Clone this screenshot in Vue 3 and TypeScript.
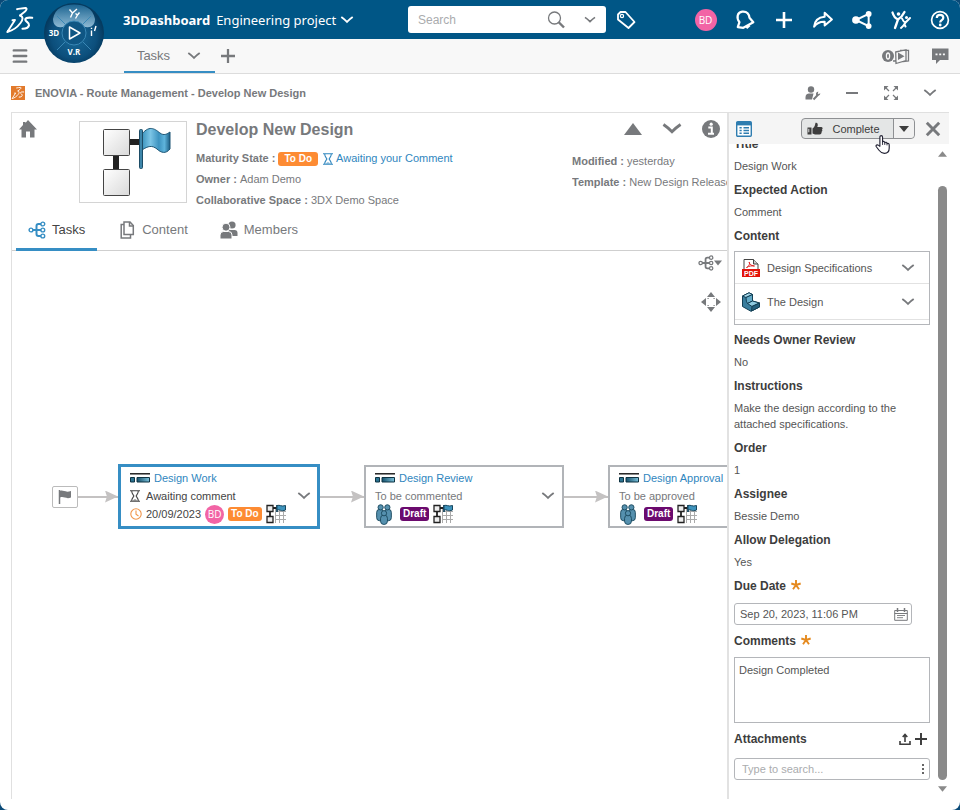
<script setup lang="ts">
import { ref } from 'vue'

interface RouteTask {
  name: string
  action: string
  state: string
  due?: string
  assignee?: string
  selected?: boolean
}

interface Field {
  label: string
  value: string
}

const routeTasks: RouteTask[] = [
  { name: 'Design Work', action: 'Awaiting comment', state: 'To Do', due: '20/09/2023', assignee: 'BD', selected: true },
  { name: 'Design Review', action: 'To be commented', state: 'Draft' },
  { name: 'Design Approval', action: 'To be approved', state: 'Draft' },
]

const leadFields: Field[] = [
  { label: 'Title', value: 'Design Work' },
  { label: 'Expected Action', value: 'Comment' },
]

const contents = [
  { icon: 'i-pdf', name: 'Design Specifications' },
  { icon: 'i-part', name: 'The Design' },
]

const fields: Field[] = [
  { label: 'Needs Owner Review', value: 'No' },
  { label: 'Instructions', value: 'Make the design according to the attached specifications.' },
  { label: 'Order', value: '1' },
  { label: 'Assignee', value: 'Bessie Demo' },
  { label: 'Allow Delegation', value: 'Yes' },
]

const topActions = [
  { icon: 'i-bell', name: 'Notifications' },
  { icon: 'i-plus', name: 'Add' },
  { icon: 'i-share', name: 'Share' },
  { icon: 'i-nodes', name: 'Communities' },
  { icon: 'i-people', name: 'People' },
  { icon: 'i-help', name: 'Help' },
]

const windowActions = [
  { icon: 'i-userwrench', name: 'Preferences' },
  { icon: 'i-minus', name: 'Minimize' },
  { icon: 'i-expand', name: 'Maximize' },
  { icon: 'i-chev', name: 'Options' },
]

const search = ref('')
const dueDate = ref('Sep 20, 2023, 11:06 PM')
const comment = ref('Design Completed')
const attachment = ref('')
</script>

<template>
  <div class="shell">
    <svg class="defs" aria-hidden="true">
      <defs>
        <linearGradient id="g-box" x1="0" y1="0" x2="1" y2="1"><stop offset="0" stop-color="#fff" /><stop offset="1" stop-color="#d9d9d9" /></linearGradient>
        <linearGradient id="g-flag" x1="0" y1="0" x2="1" y2="0"><stop offset="0" stop-color="#3b93bd" /><stop offset=".3" stop-color="#7cc5e6" /><stop offset=".6" stop-color="#3d93c0" /><stop offset=".8" stop-color="#5fb4dc" /><stop offset="1" stop-color="#1d5f85" /></linearGradient>
        <linearGradient id="g-bar" x1="0" y1="0" x2="1" y2="0"><stop offset="0" stop-color="#14506b" /><stop offset="1" stop-color="#7cc0da" /></linearGradient>
        <radialGradient id="g-compass" cx=".5" cy=".55" r=".5"><stop offset="0" stop-color="#1a6c9c" /><stop offset=".75" stop-color="#0c4f7c" /><stop offset="1" stop-color="#053b60" /></radialGradient>
        <linearGradient id="g-gloss" x1="0" y1="0" x2="0" y2="1"><stop offset="0" stop-color="#1d6896" /><stop offset="1" stop-color="#9cc4dc" /></linearGradient>
      </defs>
      <symbol id="i-ds" viewBox="5 5 30 30">
        <g fill="none" stroke="currentColor" stroke-linecap="round" stroke-linejoin="round">
          <path d="M17 9.200C20 8.800 23 8 25.500 8C27.500 8.300 26.500 10 25 11.500L20 15.500" stroke-width="1.900" />
          <path d="M20 15.500C23.500 16.500 23 20 20.500 23C17.500 27 13 30.500 7.300 32L15 20L12.500 20.300" stroke-width="1.900" />
          <path d="M32.200 17.800C29 17.400 26 17.800 25.300 19.300C25 21.500 29.500 22.500 29 25.300C28.500 28 26 28.700 22.500 28.800" stroke-width="2.100" />
        </g>
      </symbol>
      <symbol id="i-chev" viewBox="0 0 16 16"><path d="M2.300 5C4.500 6.500 6.500 8.300 8 9.800C9.500 8.300 11.500 6.500 13.700 5" fill="none" stroke="currentColor" stroke-width="1.900" /></symbol>
      <symbol id="i-plus" viewBox="0 0 16 16"><path d="M8 0v16M0 8h16" stroke="currentColor" stroke-width="2.600" /></symbol>
      <symbol id="i-bell" viewBox="0 0 18 18"><path d="M2.500 15.500L4 11C1 7 2 2 6.500 1.500C11 1 12.800 4 13 7L16.500 11L7.500 16Z" fill="none" stroke="currentColor" stroke-width="2" stroke-linejoin="round" /><path d="M9 15l3-2 2 1.500-3 2.500z" fill="currentColor" /></symbol>
      <symbol id="i-share" viewBox="0 0 18 18"><path d="M1 15C1.500 9.500 4.500 6.500 10.500 6V2.500L17 8.500L10.500 14V10.500C6.500 10.300 3.500 11.500 1 15Z" fill="none" stroke="currentColor" stroke-width="1.800" stroke-linejoin="round" /></symbol>
      <symbol id="i-nodes" viewBox="0 0 18 18"><path d="M15 3.500L3.500 9L15 14.500Z" fill="none" stroke="currentColor" stroke-width="1.800" /><circle cx="15" cy="3.500" r="2.600" fill="currentColor" /><circle cx="3.500" cy="9" r="3.400" fill="currentColor" /><circle cx="15" cy="14.500" r="2.600" fill="currentColor" /></symbol>
      <symbol id="i-people" viewBox="0 0 20 20"><g fill="none" stroke="currentColor" stroke-linecap="round" stroke-linejoin="round"><path d="M1.500 2.500C2.500 6 4.500 8.500 7 9.500C9.500 8 12 5 13.500 2M7 9.500L4 18M5.500 14L4 18" stroke-width="2.300" /><path d="M11 8.500C12 11 13 12 14.500 12.500L19 8M14.500 12.500C13.500 14.500 12.500 16 10 18M13.500 14.500L14.500 16.500" stroke-width="2" /></g><circle cx="7.500" cy="4" r="1.800" fill="currentColor" /><circle cx="15.500" cy="7.500" r="1.500" fill="currentColor" /></symbol>
      <symbol id="i-help" viewBox="0 0 20 20"><circle cx="10" cy="10" r="8.400" fill="none" stroke="currentColor" stroke-width="1.700" /><path d="M6.800 8C6.800 3.800 13.300 4 13.300 7.800C13.300 10.200 10.200 10 10.200 12.500" fill="none" stroke="currentColor" stroke-width="2.200" /><circle cx="10.200" cy="15" r="1.400" fill="currentColor" /></symbol>
      <symbol id="i-tag" viewBox="0 0 20 20"><path d="M2 4.500L4.500 2H9.500L18.500 12L12.500 18L2 9.500Z" fill="none" stroke="currentColor" stroke-width="1.800" stroke-linejoin="round" /><circle cx="6" cy="6" r="1.600" fill="none" stroke="currentColor" stroke-width="1.200" /></symbol>
      <symbol id="i-search" viewBox="0 0 18 18"><circle cx="7.500" cy="7" r="6" fill="none" stroke="currentColor" stroke-width="1.300" /><path d="M11.500 11L17 16.500" stroke="currentColor" stroke-width="2.400" /></symbol>
      <symbol id="i-menu" viewBox="0 0 16 16"><path d="M2.500 3h11M2.500 8h11M2.500 13h11" stroke="currentColor" stroke-width="2.200" stroke-linecap="round" /></symbol>
      <symbol id="i-play" viewBox="0 0 30 18"><circle cx="7" cy="9" r="6" fill="currentColor" /><ellipse cx="7" cy="9" rx="1.600" ry="3" fill="none" stroke="#f8f8f8" stroke-width="1.300" /><path d="M12 14h2.500v-1M14.700 5L25 2.700V13.500L15 16.500ZM19 3.300L27.500 3.300V14L22 14.500" fill="none" stroke="currentColor" stroke-width="1.300" /><path d="M17 5.500L23.500 9.200L17 13Z" fill="currentColor" /></symbol>
      <symbol id="i-chat" viewBox="0 0 18 18"><path d="M1 1.500h16.500v11.500H9L5 17V13H1Z" fill="currentColor" /><path d="M4.500 7.300h2M8.200 7.300h2M11.900 7.300h2" stroke="#f8f8f8" stroke-width="1.800" /></symbol>
      <symbol id="i-userwrench" viewBox="0 0 16 16"><circle cx="6" cy="4.500" r="3.200" fill="currentColor" /><path d="M.5 14.500V12C.5 9.500 2.500 8.500 4 8.500h4.500L7 14.500Z" fill="currentColor" /><path d="M8.500 14.500L13 9.800" stroke="currentColor" stroke-width="2" /><path d="M15.200 8L13.800 9.300L12.700 8.300L13.500 6.800C11.500 6.500 10.300 8.500 11.300 10.300C13 11.500 15.500 10.500 15.200 8Z" fill="currentColor" /></symbol>
      <symbol id="i-minus" viewBox="0 0 16 16"><path d="M2 8h12" stroke="currentColor" stroke-width="1.800" /></symbol>
      <symbol id="i-expand" viewBox="0 0 16 16"><path d="M1 1h4.500L1 5.500ZM15 1v4.500L10.500 1ZM1 15v-4.500L5.500 15ZM15 15h-4.500L15 10.500Z" fill="currentColor" /><path d="M2 2l4 4M14 2l-4 4M2 14l4-4M14 14l-4-4" stroke="currentColor" stroke-width="1.200" /></symbol>
      <symbol id="i-home" viewBox="0 0 18 18"><path d="M9 0L18 9.500H15.500V17.500H11V11.500H7V17.500H2.500V9.500H0L4 5V2h2.500v1Z" fill="currentColor" /></symbol>
      <symbol id="i-info" viewBox="0 0 18 18"><circle cx="9" cy="9" r="9" fill="currentColor" /><path d="M6.300 7.500h3.500v6M6 13.700h6" fill="none" stroke="#fff" stroke-width="2" /><circle cx="9.200" cy="4.200" r="1.600" fill="#fff" /></symbol>
      <symbol id="i-tree" viewBox="0 0 18 18"><g fill="none" stroke="currentColor"><path d="M4.500 9H13M13 3H10.500Q8.500 3 8.500 5V13Q8.500 15 10.500 15H13" stroke-width="2" /><circle cx="3" cy="9" r="1.900" stroke-width="1.400" /><circle cx="14.800" cy="3" r="1.900" stroke-width="1.400" /><circle cx="14.800" cy="9" r="1.900" stroke-width="1.400" /><circle cx="14.800" cy="15" r="1.900" stroke-width="1.400" /></g></symbol>
      <symbol id="i-docs" viewBox="0 0 16 18"><g fill="none" stroke="currentColor" stroke-width="1.500"><path d="M5 1h6l3.300 3.500V13.500H5Z" /><path d="M10.500 1v4h4M5 3.500H2.200V17H11.500V13.500" /></g></symbol>
      <symbol id="i-users" viewBox="0 0 18 18"><circle cx="12" cy="4" r="3.600" fill="currentColor" /><path d="M8 15V9h6.500q3 0 3 3v3Z" fill="currentColor" /><g fill="currentColor" stroke="#fff" stroke-width="1"><circle cx="6" cy="6.200" r="4" /><path d="M0 18v-4q0-3.500 3.500-3.500h5q3.500 0 3.500 3.500v4Z" /></g></symbol>
      <symbol id="i-glass" viewBox="0 0 10 12"><path d="M0 .7h10M0 11.300h10M1.700 1C1.700 4 3.800 5 3.800 6S1.700 8 1.700 11M8.300 1C8.300 4 6.200 5 6.200 6S8.300 8 8.300 11" fill="none" stroke="currentColor" stroke-width="1.100" /><path d="M2.800 10.500Q5 8.500 7.200 10.500Z" fill="currentColor" /></symbol>
      <symbol id="i-move" viewBox="0 0 22 22"><path d="M11 1l4 5H7ZM11 21l4-5H7ZM1 11l5-4v8ZM21 11l-5-4v8Z" fill="currentColor" /><path d="M7.500 7.500h1.200M13.500 7.500h1.200M7.500 14.500h1.200M13.500 14.500h1.200" stroke="currentColor" stroke-width="1.200" /></symbol>
      <symbol id="i-down" viewBox="0 0 10 8"><path d="M0 1h10L5 7Z" fill="currentColor" /></symbol>
      <symbol id="i-up" viewBox="0 0 18 12"><path d="M9 0l9 12H0Z" fill="currentColor" /></symbol>
      <symbol id="i-flag" viewBox="0 0 14 16"><path d="M1.500 1v14" stroke="currentColor" stroke-width="1.500" /><path d="M2 2C5 .5 7 4 13 2V8.500C8 10.500 6 7 2 8.500Z" fill="currentColor" /></symbol>
      <symbol id="i-bar" viewBox="0 0 20 10"><path d="M0 .8h20" stroke="#111" stroke-width="1.400" /><path d="M.5 4.500h4v4.500h-4Z" fill="#2b7391" stroke="#0d3242" /><path d="M7 4.500h12.500v4.500H7Z" fill="url(#g-bar)" stroke="#0d3242" /></symbol>
      <symbol id="i-clock" viewBox="0 0 12 12"><circle cx="6" cy="6" r="5.200" fill="none" stroke="currentColor" stroke-width="1.100" /><path d="M6 2.500V6.300L8.500 8" fill="none" stroke="currentColor" stroke-width="1.100" /></symbol>
      <symbol id="i-route" viewBox="0 0 20 20"><path d="M9 7.500h11M9 11.500h11M9 15.500h11M9.500 4v15M13.500 4v15M17.500 4v15" stroke="#aaa" /><path d="M6 4h5M4 6v9" stroke="#222" stroke-width="1.800" /><path d="M1 1.500h6v6H1ZM1 12.500h6v6H1Z" fill="#eee" stroke="#222" stroke-width="1.300" /><path d="M11 1v7" stroke="#17475f" stroke-width="1.800" /><path d="M11 1.500C14 .5 15 3 19.500 1.500V6C15 8 14 5 11 6Z" fill="#3e93bc" stroke="#17475f" /></symbol>
      <symbol id="i-group" viewBox="0 0 16 20"><g fill="#5590ae" stroke="#1c4a60" stroke-width=".9"><rect x="1" y="5" width="6.500" height="11" rx="3" /><rect x="8.500" y="5" width="6.500" height="11" rx="3" /><circle cx="4.800" cy="3.200" r="2.500" /><circle cx="11.200" cy="3.200" r="2.500" /><rect x="4.700" y="10.500" width="6.600" height="9" rx="3.200" /><circle cx="8" cy="8.800" r="2.500" /></g></symbol>
      <symbol id="i-list" viewBox="0 0 16 16"><rect x=".7" y=".7" width="14.600" height="14.600" rx="1" fill="#fff" stroke="#2f7db0" stroke-width="1.400" /><path d="M1 2.700h14" stroke="#2f7db0" stroke-width="3.400" /><path d="M3.500 6.700h2.200M3.500 9.500h2.200M3.500 12.300h2.200M7.500 6.700h5.500M7.500 9.500h5.500M7.500 12.300h5.500" stroke="#2f7db0" stroke-width="1.500" /></symbol>
      <symbol id="i-thumb" viewBox="0 0 16 14"><path d="M.5 5.500h4v7h-4Z" fill="currentColor" /><path d="M1.800 6.800v3.500" stroke="#ddd" /><path d="M5.500 6.500C8 5 8 3 8.500.8C10.500.3 11.500 2.500 10.300 5H14.500C16 5.500 15.800 7 15 7.500C15.800 8.500 15 9.700 14.500 9.800C15 11 14 12.500 12.500 12.500H8L5.500 11.500Z" fill="currentColor" /></symbol>
      <symbol id="i-x" viewBox="0 0 16 16"><path d="M2.500 2.500l11 11M13.500 2.500l-11 11" stroke="currentColor" stroke-width="2.600" /></symbol>
      <symbol id="i-pdf" viewBox="0 0 20 20"><path d="M3 1.500h9.500L17 6V18H3Z" fill="#fff" stroke="#444" /><path d="M12.500 1.500V6H17" fill="#ccc" stroke="#444" /><path d="M5.500 9.500C8.500 8 9 5 8.300 4C7.500 4.500 9.500 8 13.500 8C11 7.500 8 8 5.500 9.500Z" fill="none" stroke="#d11" stroke-width=".9" /><path d="M1 11h18v8H1Z" fill="#e3120b" /></symbol>
      <symbol id="i-part" viewBox="0 0 20 20"><g stroke="#123f54" stroke-width="1" stroke-linejoin="round"><path d="M1.500 4L8 .8L11.500 2.500V9L18.500 11V15L10 19.300L1.500 14.500Z" fill="#397d9d" /><path d="M1.500 4L8 .8L11.500 2.500L5 5.500Z" fill="#a8d8ea" /><path d="M5 5.500L11.500 2.500V9L6.500 11.500Q5 10 5 5.500Z" fill="#62a9c6" /><path d="M6.500 11.500L11.500 9L18.500 11L11 14.500Z" fill="#8ecae0" /><path d="M11 14.500L18.500 11V15L10.500 19Z" fill="#245f7c" /></g></symbol>
      <symbol id="i-cal" viewBox="0 0 14 13"><path d="M.7 2.500h12.600v9.800H.7ZM.7 5.500h12.600" fill="none" stroke="currentColor" /><path d="M3.500 0v4M10.500 0v4" stroke="currentColor" stroke-width="1.500" /><path d="M3 7.500h8M3 9.700h6" stroke="currentColor" stroke-width=".9" /></symbol>
      <symbol id="i-upload" viewBox="0 0 12 12"><path d="M1 8v3.200h10V8M6 9V1.500M3.700 4L6 1.500L8.300 4" fill="none" stroke="currentColor" stroke-width="1.600" /></symbol>
      <symbol id="i-star" viewBox="0 0 10 10"><path d="M5 5V0M5 5L.3 3.500M5 5L9.700 3.500M5 5L2 9.200M5 5L8 9.200" stroke="#e58a1f" stroke-width="1.900" /></symbol>
    </svg>

    <header class="topbar">
      <a href="#" class="logo" aria-label="Home"><svg><use href="#i-ds" /></svg></a>
      <button class="compass" aria-label="Compass">
        <svg viewBox="0 0 60 64">
          <circle cx="30" cy="33" r="30" fill="url(#g-compass)" />
          <path d="M9 19C11 8 20 4.500 30 4.500S49 8 51 19C51 25 47 28 42 27H18C13 28 9 25 9 19Z" fill="url(#g-gloss)" opacity=".9" />
          <circle cx="30" cy="33" r="12" fill="#0f5684" stroke="#3987b5" />
          <path d="M21 24l-8-8M39 24l8-8M21 42l-8 8M39 42l8 8" stroke="#3987b5" />
          <path d="M25.500 27L36 33L25.500 39Z" fill="none" stroke="#fff" stroke-width="1.500" stroke-linejoin="round" />
          <path d="M25.500 9.500L28.500 13L33 9M28.500 13L26.500 17.500M31.500 13.500L33.500 15L35.500 12.500M33.500 15L31.500 18.500" fill="none" stroke="#fff" stroke-width="1.400" />
          <path d="M47.500 30.500v5.500M47.500 27.800v1.200M50.500 31l1.500-5" stroke="#fff" stroke-width="1.400" />
          <text x="10" y="36" text-anchor="middle">3D</text>
          <text x="30" y="55" text-anchor="middle">V.R</text>
        </svg>
      </button>
      <h1 class="brand">3DDashboard</h1>
      <button class="project">Engineering project <svg><use href="#i-chev" /></svg></button>
      <div class="searchbox">
        <input v-model="search" type="text" placeholder="Search" aria-label="Search" />
        <button class="find" aria-label="Search"><svg><use href="#i-search" /></svg></button>
        <button class="scope" aria-label="Search options"><svg><use href="#i-chev" /></svg></button>
      </div>
      <button class="tool" aria-label="Tags"><svg><use href="#i-tag" /></svg></button>
      <nav class="actions">
        <button class="tool" aria-label="Profile"><span class="avatar">BD</span></button>
        <button v-for="a in topActions" :key="a.icon" class="tool" :aria-label="a.name"><svg :class="{ slim: a.icon === 'i-plus' }"><use :href="'#' + a.icon" /></svg></button>
      </nav>
    </header>

    <div class="tabbar">
      <button class="tool menu" aria-label="Menu"><svg><use href="#i-menu" /></svg></button>
      <button class="tab">Tasks <svg><use href="#i-chev" /></svg></button>
      <button class="add" aria-label="Add tab"><svg><use href="#i-plus" /></svg></button>
      <button class="tool play" aria-label="Play"><svg><use href="#i-play" /></svg></button>
      <button class="tool" aria-label="Chat"><svg><use href="#i-chat" /></svg></button>
    </div>

    <div class="widgetbar">
      <span class="appicon"><svg><use href="#i-ds" /></svg></span>
      <h2>ENOVIA - Route Management - Develop New Design</h2>
      <div class="winactions">
        <button v-for="a in windowActions" :key="a.icon" class="tool" :aria-label="a.name"><svg><use :href="'#' + a.icon" /></svg></button>
      </div>
    </div>

    <div class="frame">
      <main class="route">
        <section class="summary">
          <a href="#" class="home" aria-label="Home"><svg><use href="#i-home" /></svg></a>
          <div class="thumb">
            <svg viewBox="0 0 106 80">
              <path d="M49 20h12M36 33v16" stroke="#222" stroke-width="6" />
              <rect x="23.500" y="7.500" width="26" height="26" rx="1" fill="url(#g-box)" stroke="#444" />
              <rect x="23.500" y="47.500" width="26" height="26" rx="1" fill="url(#g-box)" stroke="#444" />
              <path d="M62 12C70 2 76 8 80 11C84 14 87 12 90 10V27C86 32 81 31 77 27C72 23 68 24 62 28Z" fill="url(#g-flag)" stroke="#1c5574" />
              <rect x="59.500" y="7.500" width="3" height="39" rx="1" fill="#3e86aa" stroke="#1c4c66" />
            </svg>
          </div>
          <div class="info">
            <h3>Develop New Design</h3>
            <p><b>Maturity State :</b> <span class="badge todo">To Do</span> <a href="#"><svg><use href="#i-glass" /></svg>Awaiting your Comment</a></p>
            <p><b>Owner :</b> Adam Demo</p>
            <p><b>Collaborative Space :</b> 3DX Demo Space</p>
          </div>
          <div class="meta">
            <div class="pager">
              <button class="tool" aria-label="Previous"><svg class="up"><use href="#i-up" /></svg></button>
              <button class="tool" aria-label="Next"><svg class="big"><use href="#i-chev" /></svg></button>
              <button class="tool" aria-label="Information"><svg><use href="#i-info" /></svg></button>
            </div>
            <p><b>Modified :</b> yesterday</p>
            <p><b>Template :</b> New Design Release</p>
          </div>
        </section>

        <nav class="subtabs">
          <button class="active"><svg><use href="#i-tree" /></svg>Tasks</button>
          <button><svg><use href="#i-docs" /></svg>Content</button>
          <button><svg><use href="#i-users" /></svg>Members</button>
        </nav>

        <section class="canvas">
          <div class="viewtools">
            <button aria-label="Layout"><svg class="tree"><use href="#i-tree" /></svg><svg class="caret"><use href="#i-down" /></svg></button>
            <button aria-label="Fit"><svg class="move"><use href="#i-move" /></svg></button>
          </div>
          <div class="flow">
            <span class="start"><svg><use href="#i-flag" /></svg></span>
            <template v-for="t in routeTasks" :key="t.name">
              <span class="arrow"></span>
              <article class="card" :class="{ selected: t.selected }">
                <div class="cardbody">
                  <div class="row"><svg class="bar"><use href="#i-bar" /></svg><a href="#">{{ t.name }}</a></div>
                  <div class="row"><svg v-if="t.selected" class="glass"><use href="#i-glass" /></svg>{{ t.action }}</div>
                  <div class="row">
                    <template v-if="t.due"><svg class="clock"><use href="#i-clock" /></svg><span>{{ t.due }}</span><span class="avatar small">{{ t.assignee }}</span></template>
                    <svg v-else class="group"><use href="#i-group" /></svg>
                    <span class="badge" :class="t.state === 'Draft' ? 'draft' : 'todo'">{{ t.state }}</span>
                    <svg class="grid"><use href="#i-route" /></svg>
                  </div>
                </div>
                <button class="open" aria-label="Open task menu"><svg><use href="#i-chev" /></svg></button>
              </article>
            </template>
          </div>
        </section>
      </main>

      <aside class="panel">
        <div class="panelbar">
          <svg class="list"><use href="#i-list" /></svg>
          <div class="split">
            <button class="complete"><svg><use href="#i-thumb" /></svg>Complete</button>
            <button class="more" aria-label="More actions"><svg><use href="#i-down" /></svg></button>
          </div>
          <button class="close" aria-label="Close"><svg><use href="#i-x" /></svg></button>
        </div>
        <svg class="pointer" viewBox="0 0 18 22"><path d="M5.500 13V2.500C5.500.5 8.500.5 8.500 2.500V8C9.500 7 11 7.500 11 9C12 8 13.500 8.500 13.500 10C14.500 9.300 16 10 16 11.500V15C16 18.500 14 21 10.500 21C7.500 21 6 19.500 4.500 17.500L1.500 13.500C.5 12 2.500 10.500 4 12Z" fill="#fff" stroke="#223" stroke-width="1.300" stroke-linejoin="round" /><path d="M8.500 8v3.500M11 9v2.500M13.500 10v2" stroke="#223" /></svg>
        <div class="panelbody">
          <div class="details">
            <div v-for="f in leadFields" :key="f.label" class="field"><h4>{{ f.label }}</h4><p>{{ f.value }}</p></div>
            <h4>Content</h4>
            <ul class="contents">
              <li v-for="c in contents" :key="c.name">
                <svg class="type" viewBox="0 0 20 20"><use :href="'#' + c.icon" /><text v-if="c.icon === 'i-pdf'" x="10" y="17.500" text-anchor="middle">PDF</text></svg>
                <span>{{ c.name }}</span>
                <button :aria-label="c.name + ' options'"><svg><use href="#i-chev" /></svg></button>
              </li>
            </ul>
            <div v-for="f in fields" :key="f.label" class="field"><h4>{{ f.label }}</h4><p>{{ f.value }}</p></div>
            <label for="due">Due Date <svg class="star"><use href="#i-star" /></svg></label>
            <div class="box date"><input id="due" v-model="dueDate" type="text" /><button aria-label="Pick date"><svg><use href="#i-cal" /></svg></button></div>
            <label for="comments">Comments <svg class="star"><use href="#i-star" /></svg></label>
            <textarea id="comments" v-model="comment"></textarea>
            <div class="attach"><label for="attachments">Attachments</label><button aria-label="Upload"><svg><use href="#i-upload" /></svg></button><button aria-label="Add attachment"><svg><use href="#i-plus" /></svg></button></div>
            <div class="box"><input id="attachments" v-model="attachment" type="text" placeholder="Type to search..." /><button class="dots" aria-label="Search options"><i></i><i></i><i></i></button></div>
          </div>
          <div class="scroll"><svg class="turn"><use href="#i-down" /></svg><span class="thumbbar"></span><svg><use href="#i-down" /></svg></div>
        </div>
      </aside>
    </div>
  </div>
</template>

<style>
body { margin: 0; background: #0a4a78; }
</style>

<style scoped>
.shell { height: 100vh; min-height: 810px; display: flex; flex-direction: column; background: #fff; border-radius: 8px; overflow: hidden; font: 11px/16px "Liberation Sans", Arial, sans-serif; color: #77797c; }
.shell *, .shell *::before { box-sizing: border-box; }
.defs { position: absolute; width: 0; height: 0; }
h1, h2, h3, h4, p, ul { margin: 0; padding: 0; }
button { display: flex; align-items: center; justify-content: center; background: none; border: 0; padding: 0; font: inherit; color: inherit; }
input, textarea { font: inherit; color: #555; border: 0; background: none; outline: 0; padding: 0; min-width: 0; }
input::placeholder { color: #aaacae; opacity: 1; }
a { color: #2f86be; text-decoration: none; }
svg { flex: none; display: block; width: 16px; height: 16px; }
.tool { width: 39px; height: 34px; flex: none; }

.topbar { position: relative; flex: none; height: 39px; display: flex; align-items: center; padding-right: 1px; background: #005686; color: #fff; }
.logo { color: #fff; padding-left: 5px; width: 123px; }
.logo svg { width: 30px; height: 30px; }
.compass { position: absolute; left: 44px; top: 0; z-index: 2; }
.compass svg { width: 60px; height: 64px; }
.compass text { font: 700 8px "Open Sans", sans-serif; fill: #fff; }
.brand { font: 700 13px/20px "Noto Sans", sans-serif; }
.project { font: 13px/20px "Noto Sans", sans-serif; margin-left: 6px; gap: 3px; white-space: nowrap; }
.searchbox { margin-left: auto; width: 198px; height: 27px; display: flex; align-items: center; background: #fff; border-radius: 3px; color: #77797c; font-size: 12px; padding-left: 10px; }
.searchbox input { flex: 1; }
.find { width: 34px; }
.find svg { width: 18px; height: 18px; }
.scope { width: 33px; }
.scope svg { width: 14px; height: 14px; }
.topbar .tool svg { width: 20px; height: 20px; }
.topbar .tool svg.slim { width: 16px; height: 16px; }
.actions { display: flex; margin-left: 41px; }
.avatar { width: 22px; height: 22px; border-radius: 50%; background: #f264a5; color: #fff; font: 10px/22px "Open Sans", sans-serif; text-align: center; }

.tabbar { flex: none; height: 35px; display: flex; align-items: center; padding-right: 1px; background: #f8f8f8; border-bottom: 1px solid #dcdcdc; font-size: 13px; }
.menu { margin-right: 85px; }
.menu svg { width: 18px; height: 18px; }
.tab { align-self: stretch; width: 91px; gap: 16px; padding-top: 2px; border-bottom: 2px solid #368ec4; }
.add { margin-left: 6px; }
.add svg { width: 14px; height: 14px; }
.play { margin-left: auto; width: 49px; }
.play svg { width: 30px; height: 18px; }
.tabbar .play + .tool svg { width: 18px; height: 18px; }

.widgetbar { flex: none; height: 38px; display: flex; align-items: center; padding: 0 11px; }
.appicon { background: #e27a2c; color: #fff; width: 14px; height: 14px; }
.appicon svg { width: 14px; height: 14px; }
h2 { font-size: 11px; margin-left: 10px; }
.winactions { margin-left: auto; display: flex; }

.frame { flex: 1; min-height: 0; display: flex; margin: 0 11px 11px; border: 1px solid #e0e0e0; border-width: 1px 0 0 1px; }
.route { flex: 1; min-width: 0; display: flex; flex-direction: column; overflow: hidden; }
.summary { display: flex; height: 98px; padding: 7px 0 0 7px; }
.home { color: #77797c; width: 60px; }
.home svg { width: 18px; height: 18px; }
.thumb { width: 108px; height: 82px; border: 1px solid #d4d4d4; margin: 1px 9px 0 0; }
.thumb svg { width: 106px; height: 80px; }
.info { flex: 1; line-height: 21px; white-space: nowrap; }
h3 { font-size: 16px; line-height: 20px; margin-bottom: 8px; }
.info p { display: flex; align-items: center; gap: 3px; height: 21px; }
.info a { display: flex; align-items: center; gap: 3px; margin-left: 2px; }
.info a svg { width: 10px; height: 12px; }
.badge { font: 700 10px/14px "Liberation Sans", sans-serif; color: #fff; border-radius: 3px; padding: 0 6px; }
.todo { background: #fd8b33; }
.draft { background: #6b0a6e; }
.meta { width: 155px; overflow: hidden; white-space: nowrap; line-height: 21px; }
.pager { display: flex; justify-content: flex-end; height: 18px; align-items: center; margin: 0 -3px 13px 0; }
.pager svg { width: 18px; height: 18px; }
.pager .up { height: 12px; }
.pager .big { width: 24px; height: 24px; }

.subtabs { flex: none; display: flex; height: 40px; padding-left: 4px; border-bottom: 1px solid #cfcfcf; font-size: 13px; }
.subtabs button { gap: 6px; padding: 0 11px; height: 40px; border-bottom: 3px solid transparent; }
.subtabs button + button { margin-left: 10px; }
.subtabs button.active { color: #444; border-color: #368ec4; padding: 0 12px; }
.subtabs .active svg { color: #368ec4; }
.subtabs svg { width: 18px; height: 18px; }

.canvas { flex: 1; min-height: 0; overflow: hidden; }
.viewtools { display: flex; flex-direction: column; align-items: flex-end; gap: 20px; padding: 4px 5px 0 0; height: 213px; }
.viewtools .tree { width: 16px; height: 16px; }
.viewtools .caret { width: 8px; height: 8px; }
.viewtools .move { width: 22px; height: 22px; }
.flow { display: flex; align-items: center; padding-left: 40px; }
.start { flex: none; width: 26px; height: 22px; border: 1px solid #bbb; border-radius: 2px; display: flex; align-items: center; justify-content: center; }
.start svg { width: 14px; height: 16px; }
.arrow { flex: none; width: 44px; height: 2px; background: #c4c2c2; position: relative; }
.start + .arrow { width: 40px; }
.arrow::before { content: ""; position: absolute; right: 0; top: -5px; width: 13px; height: 12px; background: #c4c2c2; clip-path: polygon(0 0, 100% 50%, 0 100%, 15% 50%); }
.card { flex: none; width: 200px; display: flex; border: 2px solid #b1b4b8; padding: 2px 6px 3px 9px; background: #fff; }
.card.selected { width: 202px; border: 3px solid #368ec4; color: #444; padding-right: 5px; }
.cardbody { flex: 1; }
.row { display: flex; align-items: center; height: 18px; gap: 4px; }
.bar { width: 20px; height: 10px; }
.glass { width: 10px; height: 12px; margin-right: 2px; }
.clock { width: 12px; height: 12px; color: #f0954a; }
.small { width: 19px; height: 19px; line-height: 19px; }
.group { width: 18px; height: 21px; margin-right: 3px; }
.grid { width: 20px; height: 20px; }
.row .badge { padding: 0 3px; }
.open { width: 16px; color: #77797c; }

.panel { position: relative; flex: none; width: 222px; border-left: 2px solid #e2e2e2; display: flex; flex-direction: column; color: #555; }
.panelbar { flex: none; display: flex; align-items: center; height: 31px; background: #f5f5f5; padding: 0 7px; }
.list { width: 16px; height: 16px; }
.split { display: flex; margin: 0 9px 0 auto; border: 1px solid #8e9093; border-radius: 4px; background: #e4e6e6; height: 21px; color: #3d3d3d; }
.complete { gap: 9px; width: 92px; border-right: 1px solid #8e9093; padding-right: 8px; }
.complete svg { width: 16px; height: 14px; }
.more { width: 20px; background: #f1f1f1; border-radius: 0 4px 4px 0; }
.more svg { width: 10px; height: 8px; }
.close { color: #77797c; }
.close svg { width: 18px; height: 18px; }
.pointer { position: absolute; right: 58px; top: 21px; width: 16px; height: 21px; z-index: 2; }
.panelbody { flex: 1; min-height: 0; display: flex; overflow: hidden; }
.details { flex: 1; min-width: 0; margin-top: -12px; padding-left: 5px; }
h4, label { display: block; font-size: 12px; font-weight: 700; line-height: 24px; color: #3d3d3d; }
label { display: flex; align-items: center; gap: 5px; }
.star { width: 10px; height: 10px; margin-bottom: 3px; }
.field p { padding: 2px 20px 4px 0; }
.contents { list-style: none; border: 1px solid #b4b6ba; padding-bottom: 4px; margin: 3px 0; }
.contents li { display: flex; align-items: center; height: 36px; padding: 0 13px 0 6px; border-bottom: 1px solid #e2e2e2; gap: 6px; }
.contents li:first-child { height: 32px; }
.contents span { flex: 1; }
.type { width: 20px; height: 20px; }
.type text { font: 700 7px "Liberation Sans", sans-serif; fill: #fff; }
.contents button { color: #77797c; }
.box { display: flex; align-items: center; height: 22px; border: 1px solid #b4b6ba; border-radius: 3px; padding: 0 3px 0 7px; }
.box input { flex: 1; }
.date { width: 178px; padding-left: 5px; margin: 5px 0 4px; }
.date svg { width: 14px; height: 13px; color: #77797c; }
textarea { display: block; width: 100%; height: 66px; border: 1px solid #b4b6ba; padding: 4px; margin: 4px 0; resize: none; }
.attach { display: flex; align-items: center; margin-bottom: 7px; padding-right: 3px; gap: 4px; color: #3d3d3d; }
.attach label { flex: 1; }
.attach svg { width: 12px; height: 12px; }
.dots { flex-direction: column; gap: 2px; width: 6px; }
.dots i { width: 2px; height: 2px; background: #666; }
.scroll { flex: none; width: 19px; display: flex; flex-direction: column; align-items: center; padding: 6px 0 6px 6px; color: #8a8a8a; }
.scroll svg { width: 9px; height: 8px; }
.turn { transform: rotate(180deg); }
.thumbbar { flex: 1; width: 9px; border-radius: 5px; background: #8a8a8a; margin: 28px 0 5px; }
</style>
